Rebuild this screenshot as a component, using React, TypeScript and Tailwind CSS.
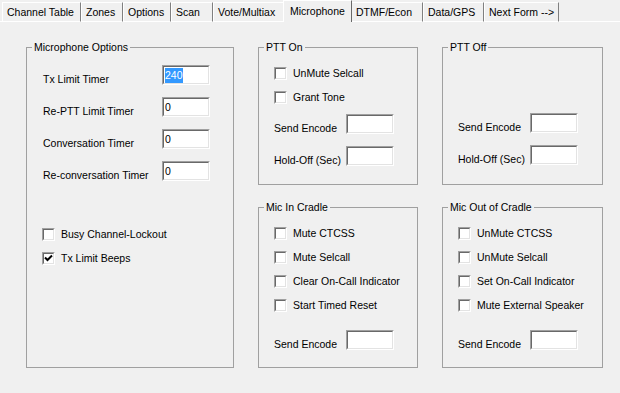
import React from "react";

const tabs: { label: string; w: number; selected?: boolean }[] = [
  { label: "Channel Table", w: 79 },
  { label: "Zones", w: 42 },
  { label: "Options", w: 48 },
  { label: "Scan", w: 42 },
  { label: "Vote/Multiax", w: 71 },
  { label: "Microphone", w: 69, selected: true },
  { label: "DTMF/Econ", w: 72 },
  { label: "Data/GPS", w: 61 },
  { label: "Next Form -->", w: 75 },
];

function Tab({ label, w, selected }: { label: string; w: number; selected?: boolean }) {
  if (selected) {
    return (
      <div
        className="h-[22px] flex items-center pl-[6px] border-l border-t border-white border-r border-r-[#696969] bg-[#f0f0f0] -mx-[1px] z-10"
        style={{ width: w }}
      >
        <span className="whitespace-nowrap">{label}</span>
      </div>
    );
  }
  return (
    <div
      className="h-[20px] flex items-center pt-[2px] pl-[4px] border-l border-t border-white border-b border-r border-r-[#808080] bg-[#f0f0f0]"
      style={{ width: w }}
    >
      <span className="whitespace-nowrap">{label}</span>
    </div>
  );
}

function Edit({ value, selected }: { value?: string; selected?: boolean }) {
  return (
    <div className="w-[48px] h-[20px] border-t border-l border-t-[#a0a0a0] border-l-[#a0a0a0] border-b border-r border-b-white border-r-white shrink-0">
      <div className="w-full h-full bg-white border-t border-l border-t-[#696969] border-l-[#696969] border-b border-r border-b-[#e3e3e3] border-r-[#e3e3e3] flex items-center pl-[1px]">
        {value !== undefined &&
          (selected ? (
            <span className="bg-[#3399ff] text-white leading-[15px]">{value}</span>
          ) : (
            <span className="leading-[15px]">{value}</span>
          ))}
      </div>
    </div>
  );
}

function Check({ label, checked }: { label: string; checked?: boolean }) {
  return (
    <div className="flex items-center h-[13px] gap-[6px]">
      <div className="w-[13px] h-[13px] border-t border-l border-t-[#a0a0a0] border-l-[#a0a0a0] border-b border-r border-b-white border-r-white shrink-0">
        <div className="w-full h-full bg-white border-t border-l border-t-[#696969] border-l-[#696969] border-b border-r border-b-[#e3e3e3] border-r-[#e3e3e3] relative">
          {checked && (
            <svg width="9" height="9" viewBox="0 0 9 9" className="absolute left-0 top-0">
              <path d="M1 3.5 L3.5 6 L8 1.5" stroke="#000" strokeWidth="2" fill="none" />
            </svg>
          )}
        </div>
      </div>
      <span className="whitespace-nowrap">{label}</span>
    </div>
  );
}

function Group({
  title,
  className,
  children,
}: {
  title: string;
  className?: string;
  children?: React.ReactNode;
}) {
  return (
    <div className={`relative border border-[#a0a0a0] ${className ?? ""}`}>
      <div className="absolute -top-[7px] left-[5px] bg-[#f0f0f0] px-[2px] leading-[13px] whitespace-nowrap">
        {title}
      </div>
      {children}
    </div>
  );
}

function EditRow({ label, value, selected, inputLeft }: { label: string; value?: string; selected?: boolean; inputLeft: number }) {
  return (
    <div className="flex items-start h-[20px]">
      <span className="mt-[8px] leading-[13px] whitespace-nowrap" style={{ width: inputLeft }}>
        {label}
      </span>
      <Edit value={value} selected={selected} />
    </div>
  );
}

export default function App() {
  return (
    <div
      className="w-[620px] h-[393px] bg-[#f0f0f0] text-black text-[10.5px] overflow-hidden"
      style={{ fontFamily: '"Liberation Sans", Arial, sans-serif' }}
    >
      <div className="h-[22px] flex items-end">
        <div className="w-[2px] h-[1px] border-b border-white self-end" />
        {tabs.map((t) => (
          <Tab key={t.label} {...t} />
        ))}
        <div className="flex-1 border-b border-white" />
      </div>

      <div className="grid grid-cols-[208px_160px_161px] grid-rows-[138px_161px] gap-x-[24px] gap-y-[22px] pl-[26px] pt-[25px]">
        <Group title="Microphone Options" className="row-span-2">
          <div className="flex flex-col gap-[12px] pl-[16px] pt-[17px]">
            <EditRow label="Tx Limit Timer" value="240" selected inputLeft={119} />
            <EditRow label="Re-PTT Limit Timer" value="0" inputLeft={119} />
            <EditRow label="Conversation Timer" value="0" inputLeft={119} />
            <EditRow label="Re-conversation Timer" value="0" inputLeft={119} />
          </div>
          <div className="flex flex-col gap-[11px] pl-[15px] mt-[47px]">
            <Check label="Busy Channel-Lockout" />
            <Check label="Tx Limit Beeps" checked />
          </div>
        </Group>

        <Group title="PTT On">
          <div className="flex flex-col gap-[11px] pl-[15px] pt-[19px]">
            <Check label="UnMute Selcall" />
            <Check label="Grant Tone" />
          </div>
          <div className="flex flex-col gap-[12px] pl-[15px] mt-[10px]">
            <EditRow label="Send Encode" inputLeft={72} />
            <EditRow label="Hold-Off (Sec)" inputLeft={72} />
          </div>
        </Group>

        <Group title="PTT Off">
          <div className="flex flex-col gap-[12px] pl-[15px] pt-[65px]">
            <EditRow label="Send Encode" inputLeft={72} />
            <EditRow label="Hold-Off (Sec)" inputLeft={72} />
          </div>
        </Group>

        <Group title="Mic In Cradle">
          <div className="flex flex-col gap-[11px] pl-[15px] pt-[19px]">
            <Check label="Mute CTCSS" />
            <Check label="Mute Selcall" />
            <Check label="Clear On-Call Indicator" />
            <Check label="Start Timed Reset" />
          </div>
          <div className="pl-[15px] mt-[18px]">
            <EditRow label="Send Encode" inputLeft={72} />
          </div>
        </Group>

        <Group title="Mic Out of Cradle">
          <div className="flex flex-col gap-[11px] pl-[15px] pt-[19px]">
            <Check label="UnMute CTCSS" />
            <Check label="UnMute Selcall" />
            <Check label="Set On-Call Indicator" />
            <Check label="Mute External Speaker" />
          </div>
          <div className="pl-[15px] mt-[18px]">
            <EditRow label="Send Encode" inputLeft={72} />
          </div>
        </Group>
      </div>
    </div>
  );
}
